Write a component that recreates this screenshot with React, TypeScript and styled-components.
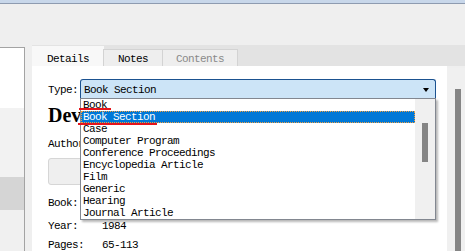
import React from "react";
import styled, { createGlobalStyle } from "styled-components";

const Global = createGlobalStyle`
  html, body { margin: 0; padding: 0; }
  body {
    width: 465px;
    height: 251px;
    overflow: hidden;
    background: #efefef;
    font-family: "Liberation Mono", "DejaVu Sans Mono", monospace;
    font-size: 11px;
    letter-spacing: -0.6px;
    color: #000;
  }
`;

const Frame = styled.div`
  width: 465px;
  height: 251px;
  display: flex;
  flex-direction: column;
  overflow: hidden;
`;

const TopStrip = styled.div`
  flex: none;
  height: 3px;
  background: #c8d7ea;
  border-bottom: 1px solid #8e9bb0;
`;

const Toolbar = styled.div`
  flex: none;
  height: 41px;
  background: #efefef;
`;

const Main = styled.div`
  flex: 1;
  min-height: 0;
  display: flex;
`;

const LeftPane = styled.div`
  flex: none;
  width: 24px;
  margin-top: 2px;
  border-top: 1px solid #a3a3a3;
  border-right: 1px solid #a3a3a3;
  display: flex;
  flex-direction: column;
`;

const LeftBand = styled.div<{ $h?: number; $bg: string }>`
  flex: ${(p) => (p.$h ? `none` : `1`)};
  height: ${(p) => (p.$h ? `${p.$h}px` : `auto`)};
  background: ${(p) => p.$bg};
`;

const Splitter = styled.div`
  flex: none;
  width: 7px;
  background: #efefef;
`;

const RightPane = styled.div`
  flex: 1;
  min-width: 0;
  display: flex;
  flex-direction: column;
`;

const TabBar = styled.div`
  flex: none;
  height: 21px;
  background: #e3e3e3;
  display: flex;
  align-items: flex-end;
`;

const Tab = styled.div<{ $active?: boolean; $disabled?: boolean; $w: number }>`
  box-sizing: border-box;
  width: ${(p) => p.$w}px;
  height: ${(p) => (p.$active ? 20 : 17)}px;
  padding-top: ${(p) => (p.$active ? 7 : 3)}px;
  line-height: 12px;
  text-align: center;
  background: ${(p) => (p.$active ? "#f8f8f8" : "#eeeeee")};
  border: ${(p) => (p.$active ? "none" : "1px solid #d3d3d3")};
  border-bottom: none;
  margin-left: ${(p) => (p.$active ? 0 : -1)}px;
  color: ${(p) => (p.$disabled ? "#8a8a8a" : "#000")};
  &:first-child { margin-left: 0; }
`;

const Body = styled.div`
  flex: 1;
  min-height: 0;
  display: flex;
`;

const Content = styled.div`
  flex: 1;
  min-width: 0;
  background: #fff;
  padding-left: 16px;
  display: flex;
  flex-direction: column;
`;

const MainScroll = styled.div`
  flex: none;
  width: 18px;
  margin-top: 2px;
  background: #f0f0f0;
  position: relative;
`;

const MainThumb = styled.div`
  position: absolute;
  left: 8px;
  top: 21px;
  bottom: 0;
  width: 6px;
  background: #858585;
`;

const TypeRow = styled.div`
  margin-top: 13px;
  height: 19px;
  display: flex;
  align-items: flex-start;
`;

const Label = styled.div<{ $w?: number }>`
  flex: none;
  width: ${(p) => (p.$w ? `${p.$w}px` : "auto")};
  line-height: 12px;
`;

const TypeLabel = styled(Label)`
  padding-top: 5px;
`;

const SelectWrap = styled.div`
  position: relative;
  width: 356px;
  height: 19px;
`;

const SelectBox = styled.div`
  box-sizing: border-box;
  height: 19px;
  background: #cce4f7;
  border: 1px solid #1b5290;
  border-bottom: none;
  border-radius: 3px 3px 0 0;
  padding: 4px 0 0 3px;
  line-height: 12px;
  display: flex;
  align-items: flex-start;
`;

const SelectText = styled.span`
  flex: 1;
`;

const Arrow = styled.span`
  margin: 4px 6px 0 0;
  width: 0;
  height: 0;
  border-left: 3.5px solid transparent;
  border-right: 3.5px solid transparent;
  border-top: 4px solid #000;
`;

const Dropdown = styled.div`
  position: absolute;
  z-index: 2;
  left: 0;
  top: 19px;
  box-sizing: border-box;
  width: 356px;
  height: 122px;
  background: #fff;
  border: 1px solid #828790;
  box-shadow: 2px 2px 2px rgba(0, 0, 0, 0.28);
  display: flex;
`;

const List = styled.div`
  flex: 1;
  display: flex;
  flex-direction: column;
`;

const Item = styled.div<{ $selected?: boolean }>`
  box-sizing: border-box;
  height: 12px;
  line-height: 12px;
  padding-left: 2px;
  white-space: nowrap;
  background: ${(p) => (p.$selected ? "#0078d7" : "transparent")};
  color: ${(p) => (p.$selected ? "#fff" : "#000")};
  outline: ${(p) => (p.$selected ? "1px dotted #f0a040" : "none")};
  outline-offset: -1px;
`;

const ListScroll = styled.div`
  flex: none;
  width: 20px;
  background: #f0f0f0;
  position: relative;
`;

const ListThumb = styled.div`
  position: absolute;
  left: 7px;
  top: 24px;
  width: 6px;
  height: 39px;
  background: #858585;
`;

const RedMark = styled.div<{ $left: number; $top: number; $w: number }>`
  position: absolute;
  z-index: 3;
  left: ${(p) => p.$left}px;
  top: ${(p) => p.$top}px;
  width: ${(p) => p.$w}px;
  height: 2px;
  background: #e5141b;
`;

const Heading = styled.div`
  margin-top: 6px;
  height: 22px;
  line-height: 22px;
  font-family: "Liberation Serif", "DejaVu Serif", serif;
  font-size: 20px;
  font-weight: bold;
  letter-spacing: 0;
  white-space: nowrap;
`;

const AuthorLabel = styled(Label)`
  margin-top: 12px;
`;

const AuthorBox = styled.div`
  margin-top: 8px;
  box-sizing: border-box;
  width: 64px;
  height: 33px;
  background: #efefef;
  border: 1px solid #d6d6d6;
  border-radius: 3px;
`;

const FieldRow = styled.div<{ $mt: number }>`
  margin-top: ${(p) => p.$mt}px;
  display: flex;
  line-height: 12px;
  white-space: nowrap;
`;

const items = [
  "Book",
  "Book Section",
  "Case",
  "Computer Program",
  "Conference Proceedings",
  "Encyclopedia Article",
  "Film",
  "Generic",
  "Hearing",
  "Journal Article",
];

export default function App() {
  return (
    <Frame>
      <Global />
      <TopStrip />
      <Toolbar />
      <Main>
        <LeftPane>
          <LeftBand $h={60} $bg="#ffffff" />
          <LeftBand $h={69} $bg="#f2f2f2" />
          <LeftBand $h={33} $bg="#d5d5d5" />
          <LeftBand $bg="#f0f0f0" />
        </LeftPane>
        <Splitter />
        <RightPane>
          <TabBar>
            <Tab $active $w={72}>Details</Tab>
            <Tab $w={60}>Notes</Tab>
            <Tab $w={76} $disabled>Contents</Tab>
          </TabBar>
          <Body>
            <Content>
              <TypeRow>
                <TypeLabel $w={32}>Type:</TypeLabel>
                <SelectWrap>
                  <SelectBox>
                    <SelectText>Book Section</SelectText>
                    <Arrow />
                  </SelectBox>
                  <Dropdown>
                    <List>
                      {items.map((it) => (
                        <Item key={it} $selected={it === "Book Section"}>
                          {it}
                        </Item>
                      ))}
                    </List>
                    <ListScroll>
                      <ListThumb />
                    </ListScroll>
                  </Dropdown>
                  <RedMark $left={-1} $top={29} $w={32} />
                  <RedMark $left={-2} $top={44} $w={79} />
                </SelectWrap>
              </TypeRow>
              <Heading>Development</Heading>
              <AuthorLabel>Author:</AuthorLabel>
              <AuthorBox />
              <FieldRow $mt={12}>
                <Label $w={54}>Book:</Label>
                <span>Advances</span>
              </FieldRow>
              <FieldRow $mt={11}>
                <Label $w={54}>Year:</Label>
                <span>1984</span>
              </FieldRow>
              <FieldRow $mt={7}>
                <Label $w={54}>Pages:</Label>
                <span>65-113</span>
              </FieldRow>
            </Content>
            <MainScroll>
              <MainThumb />
            </MainScroll>
          </Body>
        </RightPane>
      </Main>
    </Frame>
  );
}
